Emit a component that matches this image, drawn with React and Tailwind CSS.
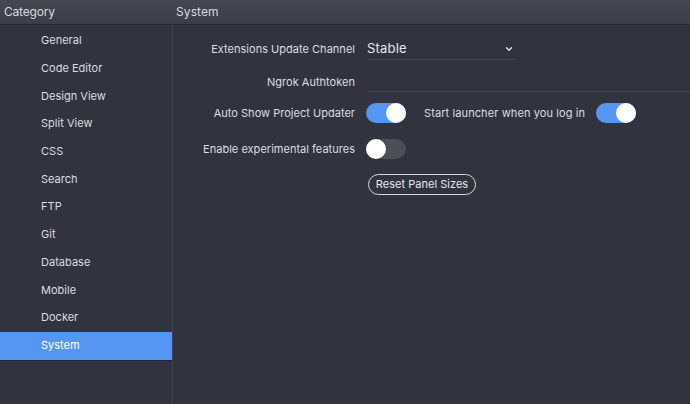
import React from 'react'
import { ChevronDown } from 'lucide-react'

const categories = ['General', 'Code Editor', 'Design View', 'Split View', 'CSS', 'Search', 'FTP', 'Git', 'Database', 'Mobile', 'Docker', 'System']

function Toggle({ on }) {
  return (
    <div className={`flex h-[20px] w-[40px] items-center rounded-full ${on ? 'justify-end bg-[#5596f2]' : 'justify-start bg-[#4c4e5a]'}`}>
      <div className="h-[20px] w-[20px] rounded-full bg-white" />
    </div>
  )
}

function Label({ children, className = '' }) {
  return <div className={`w-[165px] shrink-0 whitespace-nowrap text-right ${className}`}>{children}</div>
}

export default function App() {
  return (
    <div className="flex h-[404px] w-[690px] flex-col overflow-hidden bg-[#31333f] font-['Inter',sans-serif] text-[11px] tracking-[0.02px] text-[#dcdde1]">
      {/* Header */}
      <div className="flex h-[25px] shrink-0 items-center border-b border-[#282a34] bg-gradient-to-b from-[#454752] to-[#3b3d49] text-[12px] text-[#d8d9dd]">
        <div className="w-[176px] shrink-0 pl-[4px] tracking-[-0.2px]">Category</div>
        <div className="tracking-[0.1px]">System</div>
      </div>

      <div className="flex min-h-0 flex-1">
        {/* Sidebar */}
        <div className="w-[173px] shrink-0 border-r border-[#3f414c] pt-[2px]">
          {categories.map((c) => (
            <div
              key={c}
              className={`flex h-[27.73px] items-center pb-[1px] pl-[41px] ${c === 'System' ? 'bg-[#5596f2] text-white shadow-[0_1px_0_#25262f]' : ''}`}
            >
              {c}
            </div>
          ))}
        </div>

        {/* Settings */}
        <div className="flex-1 pl-[17px] pt-[9px]">
          <div className="flex h-[26px] items-center">
            <Label className="pt-[4px]">Extensions Update Channel</Label>
            <div className="ml-[12px] flex h-[26px] w-[149px] items-center justify-between border-b border-[#3f414c] pr-[2px] pt-[4px] text-[13px] tracking-[0.2px] text-[#e6e7ea]">
              <span>Stable</span>
              <ChevronDown size={10} strokeWidth={3} />
            </div>
          </div>
          <div className="mt-[6px] flex h-[26px] items-center">
            <Label className="pt-[6px]">Ngrok Authtoken</Label>
            <div className="ml-[12px] h-[26px] flex-1 border-b border-[#3f414c]" />
          </div>
          <div className="mt-[9px] flex h-[24px] items-center">
            <Label>Auto Show Project Updater</Label>
            <div className="ml-[11px]"><Toggle on /></div>
            <div className="ml-[18px] w-[172px] whitespace-nowrap tracking-[0.1px]">Start launcher when you log in</div>
            <Toggle on />
          </div>
          <div className="mt-[12px] flex h-[24px] items-center">
            <Label>Enable experimental features</Label>
            <div className="ml-[11px]"><Toggle /></div>
          </div>
          <div className="mt-[13px] pl-[178px]">
            <button className="flex h-[21px] w-[108px] items-center justify-center rounded-full border border-[#d8d9dd] text-[#e6e7ea]">
              Reset Panel Sizes
            </button>
          </div>
        </div>
      </div>
    </div>
  )
}
